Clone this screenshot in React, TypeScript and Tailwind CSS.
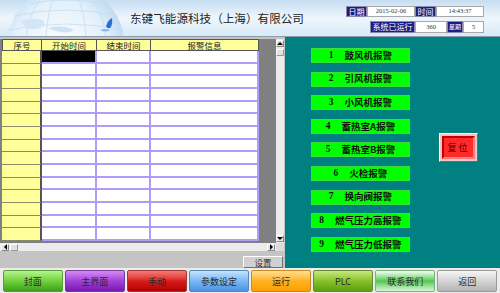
import React from 'react'

const cjk = { fontFamily: '"Noto Sans CJK SC", "Liberation Sans", sans-serif' }

const alarms = [
  { no: '1', label: '鼓风机报警' },
  { no: '2', label: '引风机报警' },
  { no: '3', label: '小风机报警' },
  { no: '4', label: '蓄热室A报警' },
  { no: '5', label: '蓄热室B报警' },
  { no: '6', label: '火检报警' },
  { no: '7', label: '换向阀报警' },
  { no: '8', label: '燃气压力高报警' },
  { no: '9', label: '燃气压力低报警' },
]

const navButtons = [
  { label: '封面', cls: 'bg-linear-to-b from-[#b4f58a] via-[#6fd23a] to-[#3ea01a] border-[#5a9a3a]' },
  { label: '主界面', cls: 'bg-linear-to-b from-[#d48af5] via-[#a23fd8] to-[#7a14b4] border-[#7a3a9a]' },
  { label: '手动', cls: 'bg-linear-to-b from-[#f57a7a] via-[#d81a1a] to-[#b40000] border-[#9a3a3a]' },
  { label: '参数设定', cls: 'bg-linear-to-b from-[#c4e2ff] via-[#7ab8f5] to-[#4a92e2] border-[#5a86b4]' },
  { label: '运行', cls: 'bg-linear-to-b from-[#ffe08a] via-[#ffb21e] to-[#ff9e00] border-[#c48a2a]' },
  { label: 'PLC', cls: 'bg-linear-to-b from-[#c8e87a] via-[#86c22a] to-[#5e9e10] border-[#6a8a3a]' },
  { label: '联系我们', cls: 'bg-linear-to-b from-[#f4fff4] via-[#4cc84c] to-[#d8f4d8] border-[#7ab47a]' },
  { label: '返回', cls: 'bg-linear-to-b from-[#f6f6f6] via-[#d4d4d4] to-[#b4b4b4] border-[#9a9a9a]' },
]

function Globe() {
  return (
    <svg width="130" height="37" viewBox="0 0 130 37" className="shrink-0">
      <defs>
        <radialGradient id="g" cx="0.45" cy="0.55" r="0.6">
          <stop offset="0" stopColor="#ffffff" />
          <stop offset="0.7" stopColor="#e2f0fb" />
          <stop offset="1" stopColor="#b8d6f0" />
        </radialGradient>
      </defs>
      <circle cx="66" cy="44" r="58" fill="url(#g)" />
      <g stroke="#c4dcf0" strokeWidth="0.8" fill="none">
        <ellipse cx="66" cy="44" rx="20" ry="58" />
        <ellipse cx="66" cy="44" rx="40" ry="58" />
        <path d="M8 30 Q66 18 124 30" />
        <path d="M14 16 Q66 4 118 16" />
        <path d="M30 4 Q66 -4 102 4" />
      </g>
      <path d="M20 22 q10 -6 22 -2 q6 4 -2 8 q-10 4 -20 -6z" fill="#d4e6f6" />
      <path d="M48 28 q14 -4 26 2 q-8 6 -26 -2z" fill="#cfe2f4" />
      <path d="M106 26 q2 -6 6 -8 q1 5 -1 9 q-3 3 -5 -1z" fill="#2a6ed0" />
      <path d="M100 30 q6 -2 10 0 q-4 3 -10 0z" fill="#8ab8e8" />
    </svg>
  )
}

function InfoLabel({ w, children }: { w: string; children: React.ReactNode }) {
  return (
    <div className={`${w} h-full bg-[#1c1c86] text-white text-[8px] leading-none flex items-center justify-center border border-[#8a8ab0] whitespace-nowrap overflow-hidden`}>
      {children}
    </div>
  )
}

function InfoValue({ w, children }: { w: string; children: React.ReactNode }) {
  return (
    <div
      className={`${w} h-full bg-white text-[#333] text-[6.5px] leading-none flex items-center justify-center border border-[#a8a8a8]`}
      style={{ fontFamily: '"Liberation Serif", serif' }}
    >
      {children}
    </div>
  )
}

function AlarmTable() {
  const rows = Array.from({ length: 15 })
  const cols = ['w-[55px]', 'w-[54px]', 'flex-1']
  return (
    <div className="w-[257px] flex flex-col bg-white">
      <div className="flex h-[12px] bg-[#ffff99] text-[8.5px] leading-none text-[#222]">
        <div className="w-[40px] border border-[#555] flex items-center justify-center">序号</div>
        <div className="w-[55px] border border-l-0 border-[#555] flex items-center justify-center">开始时间</div>
        <div className="w-[54px] border border-l-0 border-[#555] flex items-center justify-center">结束时间</div>
        <div className="flex-1 border border-l-0 border-[#555] flex items-center justify-center">报警信息</div>
      </div>
      <div className="h-[190px] flex flex-col">
        {rows.map((_, i) => (
          <div key={i} className="flex-1 flex">
            <div className="w-[40px] bg-[#ffff99] border-r-2 border-b border-r-[#555] border-b-[#8a8a6a]" />
            {cols.map((c, j) => (
              <div
                key={j}
                className={`${c} border-b-2 border-r-2 border-[#b09cf8] ${i === 0 && j === 0 ? 'bg-black' : 'bg-white'}`}
              />
            ))}
          </div>
        ))}
      </div>
    </div>
  )
}

function Arrow({ dir }: { dir: 'up' | 'down' | 'left' | 'right' }) {
  const shape = {
    up: 'border-l-[3px] border-r-[3px] border-b-[3px] border-l-transparent border-r-transparent border-b-black',
    down: 'border-l-[3px] border-r-[3px] border-t-[3px] border-l-transparent border-r-transparent border-t-black',
    left: 'border-t-[3px] border-b-[3px] border-r-[3px] border-t-transparent border-b-transparent border-r-black',
    right: 'border-t-[3px] border-b-[3px] border-l-[3px] border-t-transparent border-b-transparent border-l-black',
  }[dir]
  return (
    <div className="w-[8px] h-[7px] bg-[#e4e4e4] border border-t-white border-l-white border-r-[#888] border-b-[#888] flex items-center justify-center shrink-0">
      <div className={`w-0 h-0 ${shape}`} />
    </div>
  )
}

function LeftPanel() {
  return (
    <div className="w-[285px] bg-[#c4c4c4] flex flex-col pt-[2px]">
      <div className="flex h-[206px]">
        <div className="w-[276px] bg-[#808080] pl-[2px] flex flex-col">
          <AlarmTable />
        </div>
        <div className="w-[8px] bg-[#ececec] flex flex-col justify-between items-center py-[1px]">
          <div className="flex flex-col gap-[2px]">
            <Arrow dir="up" />
            <div className="w-[8px] h-[7px] bg-[#e0e0e0] border border-t-white border-l-white border-r-[#999] border-b-[#999]" />
          </div>
          <Arrow dir="down" />
        </div>
      </div>
      <div className="flex h-[8px]">
        <div className="w-[276px] bg-[#ececec] flex items-center justify-between px-[1px]">
          <div className="flex gap-[1px]">
            <Arrow dir="left" />
            <div className="w-[8px] h-[7px] bg-[#e0e0e0] border border-t-white border-l-white border-r-[#999] border-b-[#999]" />
          </div>
          <Arrow dir="right" />
        </div>
        <div className="w-[8px] bg-[#dcdcdc]" />
      </div>
      <div className="flex-1 flex justify-end items-start pt-[5px] pr-[2px]">
        <div className="w-[40px] h-[12px] bg-[#d0d0d0] border border-t-white border-l-white border-r-[#707070] border-b-[#707070] text-[8.5px] leading-none text-[#333] flex items-center justify-center">
          设置
        </div>
      </div>
    </div>
  )
}

function RightPanel() {
  return (
    <div className="flex-1 bg-[#008080] flex pl-[26px] pt-[11px]">
      <div className="w-[99px] flex flex-col gap-[8.6px]">
        {alarms.map((a) => (
          <div
            key={a.no}
            className="h-[15px] bg-[#00ff00] border border-[#3ce03c] flex items-center justify-center gap-[11px] text-[9.5px] leading-none font-bold text-[#111]"
          >
            <span style={{ fontFamily: '"Liberation Serif", serif' }}>{a.no}</span>
            <span>{a.label}</span>
          </div>
        ))}
      </div>
      <div className="ml-[29px] mt-[85px]">
        <div className="w-[39px] h-[29px] bg-[#f4c4c4] p-[2px] border border-t-white border-l-white border-r-[#806060] border-b-[#806060]">
          <div className="w-full h-full bg-[#ff2a2a] border-2 border-t-[#c00000] border-l-[#c00000] border-r-[#ff8080] border-b-[#ff8080] flex items-center justify-center text-[9px] leading-none text-[#4a0000] tracking-[2px]">
            复位
          </div>
        </div>
      </div>
    </div>
  )
}

export default function App() {
  return (
    <div className="w-[500px] h-[293px] flex flex-col overflow-hidden bg-white" style={cjk}>
      <header className="h-[37px] flex items-start bg-linear-to-b from-[#c6def2] via-[#eef6fc] to-[#d8eaf8] border-b border-[#8c9cac] overflow-hidden">
        <Globe />
        <div className="pt-[10px] text-[11.6px] text-[#222] leading-[16px] whitespace-nowrap">
          东键飞能源科技（上海）有限公司
        </div>
        <div className="ml-auto mr-[16px] pt-[6px] flex flex-col items-end gap-[4px]">
          <div className="flex h-[11px]">
            <InfoLabel w="w-[21px]">日期</InfoLabel>
            <InfoValue w="w-[48px]">2015-02-06</InfoValue>
            <InfoLabel w="w-[21px]">时间</InfoLabel>
            <InfoValue w="w-[48px]">14:43:37</InfoValue>
          </div>
          <div className="flex h-[12px]">
            <InfoLabel w="w-[45px]">系统已运行</InfoLabel>
            <InfoValue w="w-[32px]">360</InfoValue>
            <div className="w-[16px] h-full bg-[#1c1c86] text-white text-[6px] leading-none flex items-center justify-center border border-[#8a8ab0]">
              星期
            </div>
            <InfoValue w="w-[21px]">5</InfoValue>
          </div>
        </div>
      </header>
      <main className="h-[231px] flex">
        <LeftPanel />
        <RightPanel />
      </main>
      <footer className="flex-1 bg-[#ececec] flex items-center gap-[2.5px] px-[3px] pt-[1px]">
        {navButtons.map((b) => (
          <div
            key={b.label}
            className={`flex-1 h-[22px] rounded-[2px] border ${b.cls} flex items-center justify-center text-[9px] leading-none text-[#2a2a2a]`}
          >
            {b.label}
          </div>
        ))}
      </footer>
    </div>
  )
}
